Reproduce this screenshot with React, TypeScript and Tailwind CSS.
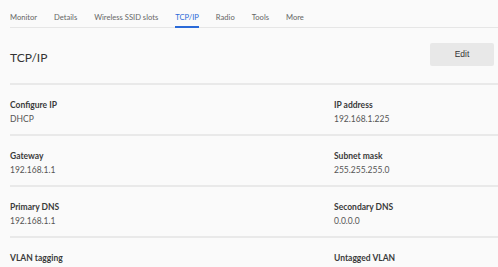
import React from "react";

const tabs = ["Monitor", "Details", "Wireless SSID slots", "TCP/IP", "Radio", "Tools", "More"];

const rows: [string, string, string, string][] = [
  ["Configure IP", "DHCP", "IP address", "192.168.1.225"],
  ["Gateway", "192.168.1.1", "Subnet mask", "255.255.255.0"],
  ["Primary DNS", "192.168.1.1", "Secondary DNS", "0.0.0.0"],
  ["VLAN tagging", "", "Untagged VLAN", ""],
];

function Cell({ label, value }: { label: string; value: string }) {
  return (
    <div className="flex flex-col">
      <div className="text-[8.5px] leading-[14px] font-bold text-[#3a3a3a]">{label}</div>
      <div className="text-[8.5px] leading-[14px] text-[#555]">{value}</div>
    </div>
  );
}

export default function App() {
  return (
    <div
      className="w-[498px] h-[267px] overflow-hidden bg-[#fafafa] pl-[10px]"
      style={{ fontFamily: "Lato, 'Noto Sans', sans-serif" }}
    >
      <div className="flex h-[28px] border-b border-[#e6e6e6] gap-[17px]">
        {tabs.map((t) => (
          <div
            key={t}
            className={
              "h-[28px] pt-[8px] border-b-2 text-[7.6px] leading-[18px] " +
              (t === "TCP/IP"
                ? "border-[#2a6ad8] text-[#2a6ad8]"
                : "border-transparent text-[#666]")
            }
          >
            {t}
          </div>
        ))}
      </div>
      <div className="flex items-center justify-between h-[57px] border-b-2 border-[#e9e9e9] pr-[4px]">
        <div className="text-[12px] text-[#333] mt-[4px]">TCP/IP</div>
        <div
          className="w-[64px] h-[23px] bg-[#e8e8e8] rounded-[2px] flex items-center justify-center text-[8.5px] text-[#333] mt-[-2px]"
          style={{ fontFamily: "'Liberation Sans', Arial, sans-serif" }}
        >
          Edit
        </div>
      </div>
      {rows.map((r, i) => (
        <div
          key={i}
          className="grid grid-cols-[324px_1fr] h-[51px] pt-[13px] border-b-2 border-[#e9e9e9]"
        >
          <Cell label={r[0]} value={r[1]} />
          <Cell label={r[2]} value={r[3]} />
        </div>
      ))}
    </div>
  );
}
